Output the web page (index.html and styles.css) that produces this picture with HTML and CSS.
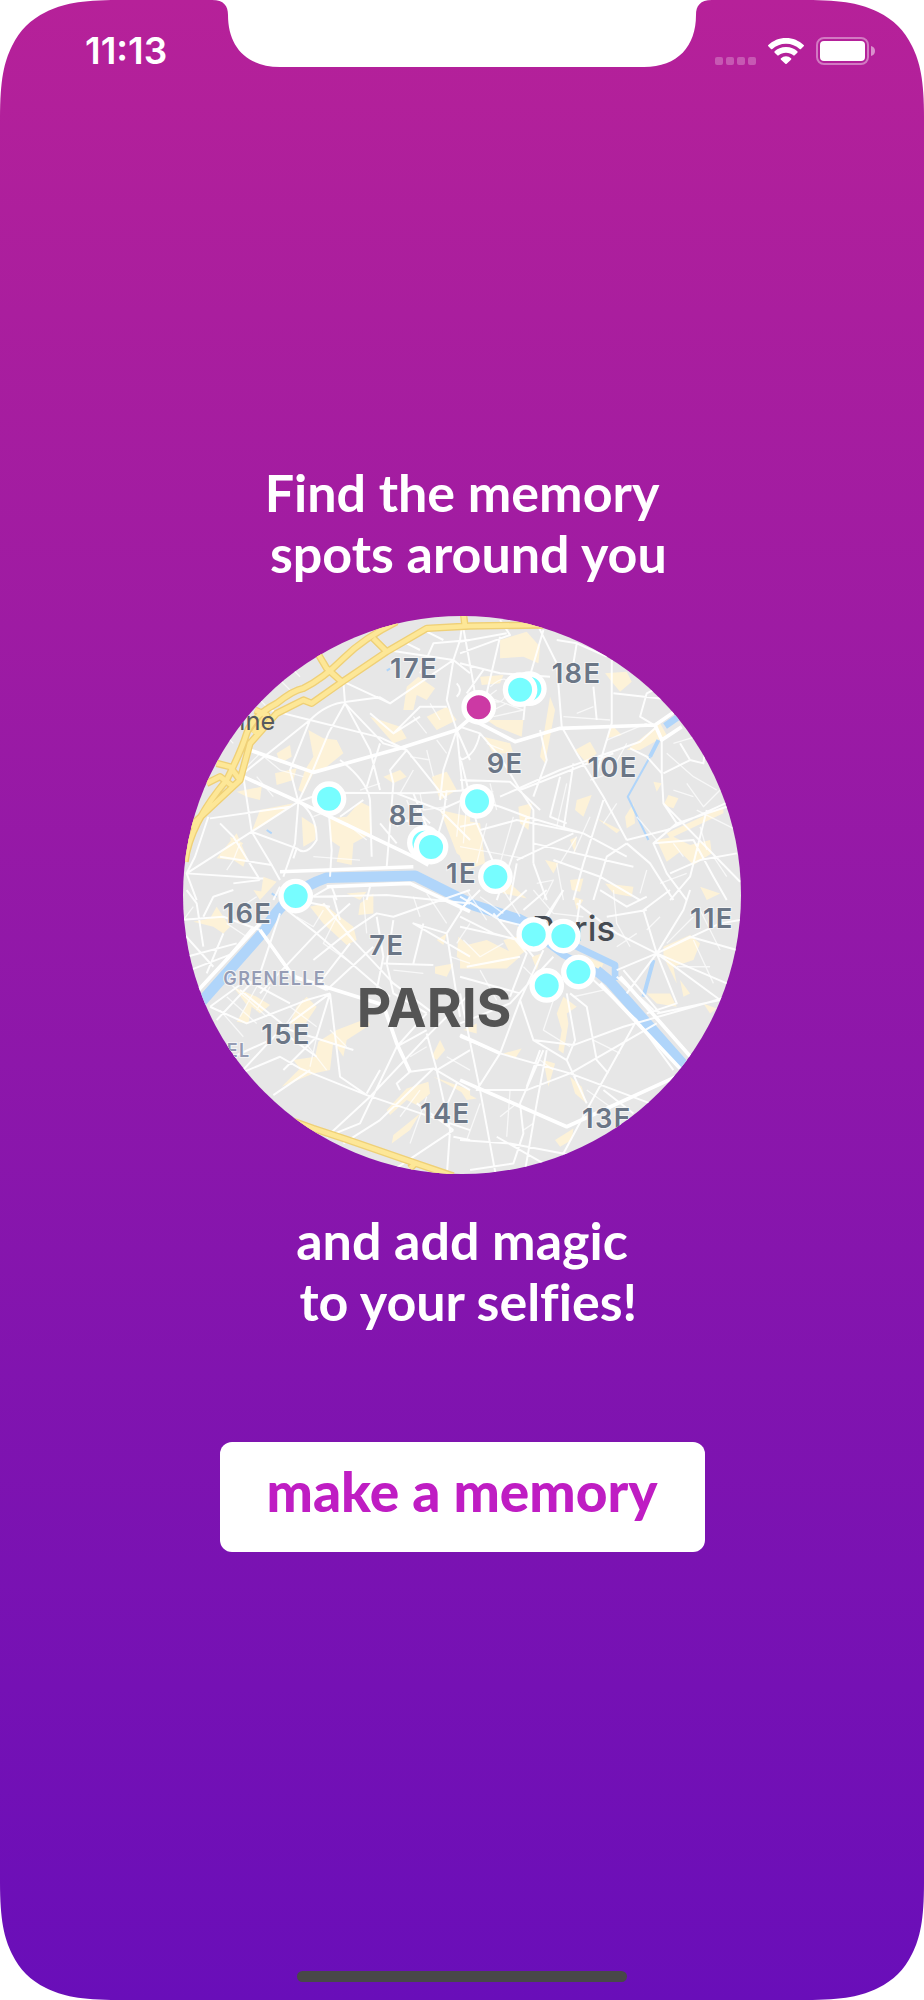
FILE: index.html
```html
<!DOCTYPE html>
<html lang="en">
<head>
    <meta charset="UTF-8">
    <meta name="viewport" content="width=device-width, initial-scale=1.0">
    <title>Make a memory</title>
    <link rel="stylesheet" href="styles.css">
</head>
<body>
    <div class="phone">
        <svg class="corner top-left" viewBox="0 0 118 118"><path d="M0 0H118C80 0 62 4 46 12C30 20 20 30 12 46C4 62 0 80 0 118Z"/></svg>
        <svg class="corner top-right" viewBox="0 0 118 118"><path d="M0 0H118C80 0 62 4 46 12C30 20 20 30 12 46C4 62 0 80 0 118Z"/></svg>
        <svg class="corner bottom-left" viewBox="0 0 118 118"><path d="M0 0H118C80 0 62 4 46 12C30 20 20 30 12 46C4 62 0 80 0 118Z"/></svg>
        <svg class="corner bottom-right" viewBox="0 0 118 118"><path d="M0 0H118C80 0 62 4 46 12C30 20 20 30 12 46C4 62 0 80 0 118Z"/></svg>
        <svg class="notch" viewBox="0 0 500 68"><path d="M0 0C12 0 16 6 16 15C16 46 34 67 68 67H432C466 67 484 46 484 15C484 6 488 0 500 0Z"/></svg>

        <header class="status-bar">
            <time class="clock">11:13</time>
            <div class="status-icons">
                <svg class="signal" viewBox="0 0 41 8" width="41" height="8">
                    <rect width="8" height="8" rx="2"/>
                    <rect x="11" width="8" height="8" rx="2"/>
                    <rect x="22" width="8" height="8" rx="2"/>
                    <rect x="33" width="8" height="8" rx="2"/>
                </svg>
                <svg class="wifi" viewBox="0 0 108 78" width="36" height="26">
                    <path d="M54 0C75 0 93 8 107 21Q109 23 107 25L99 33Q97 35 95 33C84 23 70 17 54 17S24 23 13 33Q11 35 9 33L1 25Q-1 23 1 21C15 8 33 0 54 0Z"/>
                    <path d="M54 27C68 27 80 32 88 40Q90 42 88 44L80 52Q78 54 76 52C70 47 63 44 54 44S38 47 32 52Q30 54 28 52L20 44Q18 42 20 40C28 32 40 27 54 27Z"/>
                    <path d="M54 55Q63 55 69 61Q71 63 69 65L56 77Q54 79 52 77L39 65Q37 63 39 61Q45 55 54 55Z"/>
                </svg>
                <svg class="battery" viewBox="0 0 59 28" width="59" height="28">
                    <rect class="battery-case" x="1" y="1" width="51" height="26" rx="7"/>
                    <rect x="4" y="4" width="45" height="20" rx="4"/>
                    <path class="battery-cap" d="M55 9Q59 10 59 14T55 19Z"/>
                </svg>
            </div>
        </header>

        <main class="intro">
            <h1 class="message">Find the memory
 spots around you</h1>

            <svg class="map" viewBox="9 18 1674 1674" role="img" aria-label="Map of the memory spots in Paris">
                <rect class="land" x="9" y="18" width="1674" height="1674"/>

                <!-- shopping areas -->
                <g class="areas">
                    <path d="M715 200L765 235L740 270L710 255L700 300L670 300L680 230ZM570 320L600 330L660 350L680 385L640 400ZM740 320L800 290L830 330L770 360ZM385 360L430 385L470 390L490 430L440 470L400 490L370 550L355 540L375 480L400 440ZM290 430L330 405L335 440L300 460ZM285 490L350 475L340 510L290 525ZM170 545L245 530L240 570L200 560ZM540 575L570 590L575 670L520 700L515 765L470 755L480 710L450 690V625L500 620ZM240 600L340 580L260 640L215 665ZM365 620L410 650L405 690L370 710ZM110 745L170 670L200 740L190 770L160 750ZM610 500L660 480L680 500L640 520ZM755 500L800 485L830 540L780 570ZM780 600L870 620V760L830 730ZM250 800L290 815L240 870ZM500 850L560 845L540 870ZM150 680L190 700L160 730Z"/>
                    <path transform="translate(840 0)" d="M120 90L200 65L240 110L235 160L190 140L120 145ZM60 200L130 195L120 220L65 225ZM80 330L190 330L185 380L110 350ZM70 380L150 400L160 430L100 430ZM270 260L285 300L255 460L240 440ZM435 190L500 185L515 215L480 245L455 215ZM345 420L390 395L410 430L380 460ZM455 345L485 375L440 385ZM500 420L600 340L620 375L540 420ZM350 570L395 555L370 620L345 600ZM175 590L215 580L205 660L180 640ZM0 630L60 640L75 760L20 780L0 740ZM580 515L605 520L590 545ZM625 555L655 565L640 595L610 585ZM495 620L520 580L525 640L500 655ZM590 690L640 680L690 705L750 690L755 730L700 765L660 725L620 755ZM330 690L350 680L345 730ZM330 810L370 805L360 845L335 840ZM80 780L150 820L200 865L130 850ZM255 750L295 760L280 790ZM435 820L520 830L515 860L460 850ZM620 670L790 590V610L630 685ZM720 830L780 850L740 870ZM410 625L480 660L470 670Z"/>
                    <path transform="translate(0 840)" d="M40 95L90 85L110 50L150 110L130 130L100 110ZM390 50L430 40L480 80L520 110L530 150L500 165L430 100ZM540 40L580 10V70L535 75ZM770 150L800 130L790 165ZM835 140L870 170V230L830 200ZM765 230L820 220L800 260L765 250ZM160 290L230 320L270 345L240 370L215 350L205 400L170 395L200 345ZM350 350L380 320L410 350L370 410L330 400ZM415 455L470 420L560 385L570 405L500 450L490 500L460 455L450 540L400 550L305 590L360 535L340 510L405 500ZM620 660L680 595L745 575L750 610L710 645L680 630L630 675ZM635 760L640 735L720 670L690 720ZM760 560L870 600V620ZM755 500L780 450L795 480L770 510ZM220 0L250 5L240 30Z"/>
                    <path transform="translate(840 840)" d="M0 170L80 150L140 180L180 200L140 235L0 235ZM130 150L170 140L200 180L160 210ZM215 200L245 190L230 240ZM610 170L690 135L720 160L700 210L640 230L650 280L610 200ZM660 270L690 310L670 320ZM560 310L630 310L650 350L590 340ZM290 370L310 320L350 350L320 370L325 400L310 490L295 480L305 420ZM250 510L285 520L265 590ZM330 560L365 590L380 640L345 610ZM285 750L340 715L335 750L300 770ZM0 600L50 625L20 630ZM130 490L185 475L165 505ZM730 340L770 355L750 370ZM350 190L430 220L420 245ZM340 20L370 30L350 60ZM170 110L230 130L200 160ZM10 420L50 400V430Z"/>
                </g>

                <!-- Seine and canals -->
                <g class="water">
                    <path class="seine" d="M60 1180L255 960Q315 845 440 803L705 797L880 885L1015 928"/>
                    <path class="seine-arm" d="M1000 925L1150 1035L1270 1095"/>
                    <path class="seine-arm" d="M1015 920L1180 1005L1305 1065V1110"/>
                    <path class="seine" d="M1250 1082L1290 1115L1520 1375"/>
                    <path class="canal" d="M1435 390L1410 440M1420 1050L1390 1160"/>
                    <path class="seine-arm" d="M1455 348L1510 310"/>
                    <path class="canal-narrow" d="M1410 440L1343 560L1405 690M580 440L590 430M260 660L275 670M620 182L630 176M275 850L290 860"/>
                </g>

                <!-- streets, one group per quarter of the map -->
                <g class="streets">
                    <path d="M490 215L495 280L610 400L680 420M495 280L445 370L395 490L355 575L330 480L390 330L190 490M390 330L600 382L680 420L800 570M390 330L250 295M390 330Q440 280 500 275L600 262L630 280L490 215M820 150L630 280M820 150L840 90L850 20M820 150L870 190M820 150L800 270L830 360L870 450M830 360L790 480L780 570M830 360L850 560M570 310L640 370L720 320M640 370L720 290L800 290M495 280L570 420L600 540M680 420L630 480L640 520L620 770M445 590L455 720L450 800M570 570L575 740M480 450Q560 510 570 570M480 620L550 570M355 575L430 548L720 550L870 540M355 575L215 665L20 790M355 575L345 700L310 800M355 575Q410 610 410 690Q380 740 350 715M90 625L330 590M190 500L215 665L275 765L300 810M20 790L250 805M85 620L45 740L20 790L50 870M215 665L350 715L340 745M120 640L160 680L240 810M275 765L120 740M720 190L760 100L870 90M620 120L820 150M740 65L790 90M680 100L720 120M600 400L560 530M700 550L760 700M650 550L780 600L870 690M640 620L740 650M600 640L650 700M800 540L790 620L760 720M780 600L870 560M710 600L750 640M830 220Q850 240 830 260M240 810L160 820M300 830L280 870M380 870L450 830L640 820M455 830L470 870M570 830L560 870"/>
                    <path class="minor" d="M240 270L270 300M300 210L330 240M340 180L360 200M110 350L160 400M190 480L240 430L300 480L370 500M230 500L280 560M140 780L160 750L180 700M400 620L450 600M500 640L560 690M400 740L540 750M680 570L700 620L650 650M720 550L730 600L800 590M690 440L750 450M740 420L760 500M540 540L600 520M700 480L660 550M770 390L800 430M750 280L780 330M700 320L740 370M840 580L830 680M860 580L850 700"/>
                    <g transform="translate(840 0)">
                        <path d="M0 0L40 220L50 290M0 130L150 75L120 30M0 95L140 70M235 50L290 160L305 350M455 150V340L410 490M290 90L350 100L440 140M0 160L120 190L270 200M70 180L20 250M120 80L80 250M250 60L200 230L190 330M0 350L60 370Q45 440 0 450M60 370L120 440L180 540L220 600V760M305 350L350 430L430 560L500 690M430 570L370 760L340 870M0 440L20 520L50 640L110 780M0 510L150 515L240 600M20 560L120 590L200 620L370 670L500 740M120 560L300 480L540 395L590 350M180 540L460 430M590 350L540 320L560 250L580 240M605 390V490L610 580L840 815M605 490L560 440L510 415M610 490L690 450L660 400M690 450L730 460L740 380M610 580L650 640L800 590M650 640L580 700L620 790L680 870M500 700L570 760L640 870M500 700L440 740L400 870M500 690L620 660L840 560M630 790L720 750L830 730M580 700L700 690L760 800L800 870M170 750L340 670M170 760L150 870M220 700L520 770M200 620L110 870M300 500L270 620L320 640M340 460L310 660M400 230L410 330M350 100L340 160M460 250L640 270M240 360L260 450L220 560M50 640L0 650M60 660L170 630L370 670M220 760L260 870M280 750L420 800L540 870M740 600L690 800L630 870"/>
                        <path class="minor" d="M90 230Q150 180 140 240T80 260L190 300L100 320M110 240L70 270M140 280L100 300M80 400L130 420M310 320L450 330M350 310L400 290M440 390L560 340M500 400L450 490L390 510M640 400L740 370M620 430L700 500L770 540M680 520L730 590L780 540M700 560L640 540M710 600L830 660M10 540L100 545M10 570L80 570M90 520L110 600M160 620L120 760M80 640L50 760M0 710L190 745M230 820L280 810L250 870M290 760L310 870M350 680L300 760M390 620L340 730M320 520L290 650M430 640L470 580M530 620L590 690M640 700L670 740M720 650L740 720M760 740L800 800M560 780L540 850M600 820L680 790"/>
                    </g>
                    <g transform="translate(0 840)">
                        <path d="M240 120L330 250L440 300M320 60L410 130L630 320M410 130L510 40M400 210L500 130L590 70L640 80L870 0M410 130L240 310M510 160L410 290M580 170L440 300M500 130L640 280L760 370M590 80L610 200L590 300M640 90L620 220L640 310L740 370M300 70L240 250L110 390M450 310L300 420L180 550M450 310L480 560L560 615M450 310L410 440L310 540M800 130L700 100L870 200M800 130L870 20M800 130L840 380M740 370L650 470L740 420M650 470L540 700L440 740M740 430L770 540L810 720L800 860M870 310L750 430L570 620L440 740M180 550L300 500L360 535L560 615L870 720M300 420L410 500M180 300L330 420L520 480M90 350L200 270L330 340M90 350L200 400L380 330L450 310M280 615L390 540M160 500L270 450M690 545L760 535L870 600M690 545L650 580L660 600M760 535L600 690L490 760M820 720L640 840M820 720L710 640M820 740L870 750M830 580L780 690M20 0L50 40L70 170M0 90L130 80L240 120M70 80L100 20L160 0M20 200L170 160M30 240L160 190M10 130L100 230M120 230L220 110M80 250L130 130M400 20L620 15L870 40M430 40L520 150M730 100L700 220M610 220L760 225M600 540L560 610M870 480L770 540M460 20L480 90M350 30L450 50"/>
                        <path class="minor" d="M150 280L260 380M140 320L230 400M230 290L180 380M270 290L230 360M120 360L190 440M330 350L410 410M370 330L320 400M370 450L440 540M450 420L500 470M410 440L390 530M430 60L400 110L350 80M470 80L430 160L500 210M550 20L560 130M690 500L740 470M800 500L870 540M720 600L660 680M740 620L690 760M640 240L730 250M810 200L870 220M700 20L720 80M740 10L800 100M870 100L830 160M40 50L10 90M170 60L230 20M200 140L140 100"/>
                    </g>
                    <g transform="translate(840 840)">
                        <path d="M0 440L120 490L330 550L570 640M120 490L50 600L200 600L330 550L590 400M120 490L180 330L250 180M0 310L60 600L110 870M180 330L220 450L320 510L380 640M220 450L340 465L490 410L770 330L840 300M530 390L380 660L310 790L290 870M590 370L780 330M400 270L530 390L640 540M330 310L380 350L410 510L445 550M320 310L345 450L320 510M260 480L230 640L190 870M250 480L180 640L190 730L160 820L30 840M0 750L150 760L360 800M0 80L100 130L240 170M0 110L180 150L220 200M0 60L60 0M110 80L200 0M190 60L260 0M250 90L310 0M100 70L200 190L150 320M0 260L180 310M0 400L150 340L280 200M20 230L180 200M350 40L470 130L590 190L780 330M590 190L550 60L630 0M590 190L670 60L690 0M590 190L780 100L840 90M590 190L800 280L830 270M590 190L650 340L560 370M590 190L470 240M590 190L500 310M590 190L690 140L830 180M470 260L580 360M490 240L600 370M430 600L520 670M200 590L240 480M110 740L250 820M0 20L120 90L240 120L310 0M360 30L350 100M420 0L500 50L560 20M440 80L560 60"/>
                        <path class="minor" d="M20 0L80 90M60 20L130 70M130 0L180 80M220 0L280 70L370 80M10 150L60 200L130 160M60 240L110 330M190 230L240 280M280 330L250 420L330 470M240 510L280 540M380 600L450 650L440 700M190 720L220 700M170 640L120 680M620 160L700 80M650 230L750 230M700 150L760 280M530 130L470 170M460 0L470 100L510 170M600 80L560 120M720 60L780 180M340 320L430 300M400 450L480 490M60 640L20 750M150 600L140 740"/>
                    </g>
                </g>

                <g class="avenues">
                    <path d="M190 500L355 575L700 740L745 765M195 415L400 487L660 415L830 360L870 325L1005 395L1140 355L1425 345L1520 280M300 785L700 770M440 830L690 820L870 905M1425 345L1445 390L1505 350M240 960L340 1100L610 1185L650 1300L690 1385M0 1200L240 940M840 1410L1160 1550L1510 1390M840 1275L960 1330M1260 1120L1500 1375M1320 1100L1540 1350"/>
                </g>

                <!-- ring road -->
                <g class="ring-road-edge">
                    <path d="M15 755Q30 640 140 510Q185 420 200 370T290 280Q340 240 370 235Q430 205 490 145T650 35M30 650L105 580L180 510L210 400L290 310L370 270L395 280L480 220L620 125L740 55L870 48L1090 45M410 125L440 175L485 215M580 85L620 125M850 10L855 50M110 460L150 470L180 510M80 520L120 500L160 530M225 300L260 315L220 370"/>
                    <path d="M330 1530L400 1555L500 1588L700 1657L820 1698M690 1675L705 1660"/>
                </g>
                <g class="ring-road">
                    <path d="M15 755Q30 640 140 510Q185 420 200 370T290 280Q340 240 370 235Q430 205 490 145T650 35M30 650L105 580L180 510L210 400L290 310L370 270L395 280L480 220L620 125L740 55L870 48L1090 45M410 125L440 175L485 215M580 85L620 125M850 10L855 50M110 460L150 470L180 510M80 520L120 500L160 530M225 300L260 315L220 370"/>
                    <path d="M330 1530L400 1555L500 1588L700 1657L820 1698M690 1675L705 1660"/>
                </g>

                <g class="district">
                    <text x="630" y="205">17E</text>
                    <text x="1115" y="220">18E</text>
                    <text x="920" y="490">9E</text>
                    <text x="1222" y="500">10E</text>
                    <text x="626" y="646">8E</text>
                    <text x="798" y="820">1E</text>
                    <text x="128" y="940">16E</text>
                    <text x="568" y="1034">7E</text>
                    <text x="1530" y="954">11E</text>
                    <text x="244" y="1302">15E</text>
                    <text x="720" y="1538">14E</text>
                    <text x="1206" y="1554">13E</text>
                </g>
                <g class="quarter">
                    <text x="130" y="1125">GRENELLE</text>
                    <text x="140" y="1341">EL</text>
                </g>
                <text class="suburb" x="178" y="361">ine</text>
                <text class="town" x="1056" y="993">Paris</text>
                <text class="city" x="530" y="1250">PARIS</text>

                <g class="spots">
                    <circle cx="1048" cy="236" r="44"/>
                    <circle cx="1020" cy="239" r="44"/>
                    <circle class="me" cx="896" cy="292" r="44"/>
                    <circle cx="447" cy="566" r="44"/>
                    <circle cx="891" cy="574" r="44"/>
                    <circle cx="733" cy="698" r="44"/>
                    <circle cx="753" cy="711" r="44"/>
                    <circle cx="946" cy="800" r="44"/>
                    <circle cx="347" cy="858" r="44"/>
                    <circle cx="1061" cy="973" r="44"/>
                    <circle cx="1150" cy="978" r="44"/>
                    <circle cx="1100" cy="1126" r="44"/>
                    <circle cx="1195" cy="1086" r="44"/>
                </g>
            </svg>

            <p class="message">and add magic
 to your selfies!</p>

            <button class="make" type="button">make a memory</button>
        </main>

        <div class="home-indicator"></div>
    </div>
</body>
</html>
```

FILE: styles.css
```css
* {
    box-sizing: border-box;
}
body {
    margin: 0;
    background: #fff;
    font-family: Lato, "Open Sans", sans-serif;
}
.phone {
    position: relative;
    display: flex;
    flex-direction: column;
    align-items: center;
    min-height: 100vh;
    background: linear-gradient(#b62199, #690eb9);
    color: #fff;
}

/* white corners and notch over the screen */
.corner {
    position: absolute;
    width: 118px;
    height: 118px;
    fill: #fff;
}
.top-left {
    top: 0;
    left: 0;
}
.top-right {
    top: 0;
    right: 0;
    transform: scaleX(-1);
}
.bottom-left {
    bottom: 0;
    left: 0;
    transform: scaleY(-1);
}
.bottom-right {
    bottom: 0;
    right: 0;
    transform: scale(-1);
}
.notch {
    position: absolute;
    top: 0;
    left: 50%;
    width: 500px;
    height: 68px;
    transform: translateX(-50%);
    fill: #fff;
}

.status-bar {
    display: flex;
    justify-content: space-between;
    align-items: center;
    width: 100%;
    height: 101px;
    padding: 0 49px 0 85px;
}
.clock {
    font: 600 37px Inter, sans-serif;
}
.status-icons {
    display: flex;
    align-items: center;
    gap: 12px;
    fill: #fff;
}
.signal {
    align-self: flex-end;
    opacity: 0.25;
}
.battery-case {
    fill: none;
    stroke: #fff;
    stroke-width: 2;
    opacity: 0.4;
}
.battery-cap {
    opacity: 0.5;
}

.intro {
    flex: 1;
    display: flex;
    flex-direction: column;
    align-items: center;
    justify-content: center;
    width: 100%;
    padding-bottom: 58px;
}
.message {
    margin: 0;
    font-size: 52px;
    font-weight: 700;
    font-variant-ligatures: none;
    line-height: 61px;
    text-align: center;
    white-space: pre;
}
.map {
    display: block;
    width: 60.4%;
    margin: 32px 0 36px;
    border-radius: 50%;
}
.make {
    width: 485px;
    max-width: 90%;
    height: 110px;
    margin-top: 110px;
    padding: 0 0 12px;
    border: none;
    border-radius: 12px;
    background: #fff;
    color: #bf1dc3;
    font-family: inherit;
    font-size: 55px;
    font-weight: 900;
    cursor: pointer;
}
.home-indicator {
    width: 330px;
    height: 11px;
    margin-bottom: 18px;
    border-radius: 6px;
    background: #484848;
}

/* map */
.land {
    fill: #e7e7e7;
}
.areas {
    fill: #fdf2d8;
}
.water path {
    fill: none;
    stroke: #b0d5fa;
    stroke-linejoin: round;
}
.water .seine {
    stroke-width: 32;
}
.water .seine-arm {
    stroke-width: 20;
}
.water .canal {
    stroke-width: 12;
}
.water .canal-narrow {
    stroke-width: 6;
}
.streets path,
.avenues path,
.ring-road path,
.ring-road-edge path {
    fill: none;
    stroke: #fff;
    stroke-width: 6;
    stroke-linejoin: round;
}
.streets path {
    opacity: 0.9;
}
.streets .minor {
    stroke-width: 4;
    opacity: 0.7;
}
.avenues path {
    stroke-width: 11;
}
.ring-road-edge path {
    stroke: #efd077;
    stroke-width: 22;
}
.ring-road path {
    stroke: #fde797;
    stroke-width: 14;
}
.map text {
    font-family: Inter, sans-serif;
}
.district {
    font-size: 82px;
    font-weight: 600;
    letter-spacing: 4px;
    fill: #6b7686;
    stroke: #f4f4f4;
    stroke-width: 6;
    paint-order: stroke;
}
.quarter {
    font-size: 54px;
    font-weight: 600;
    letter-spacing: 4px;
    fill: #959cb5;
    stroke: #f4f4f4;
    stroke-width: 6;
    paint-order: stroke;
}
.suburb {
    font-size: 76px;
    fill: #55595f;
}
.town {
    font-size: 104px;
    font-weight: 500;
    fill: #474c53;
}
.city {
    font-size: 160px;
    font-weight: 700;
    fill: #545454;
}
.spots circle {
    fill: #77fdff;
    stroke: #fff;
    stroke-width: 16;
}
.spots .me {
    fill: #cc39a4;
}
```
